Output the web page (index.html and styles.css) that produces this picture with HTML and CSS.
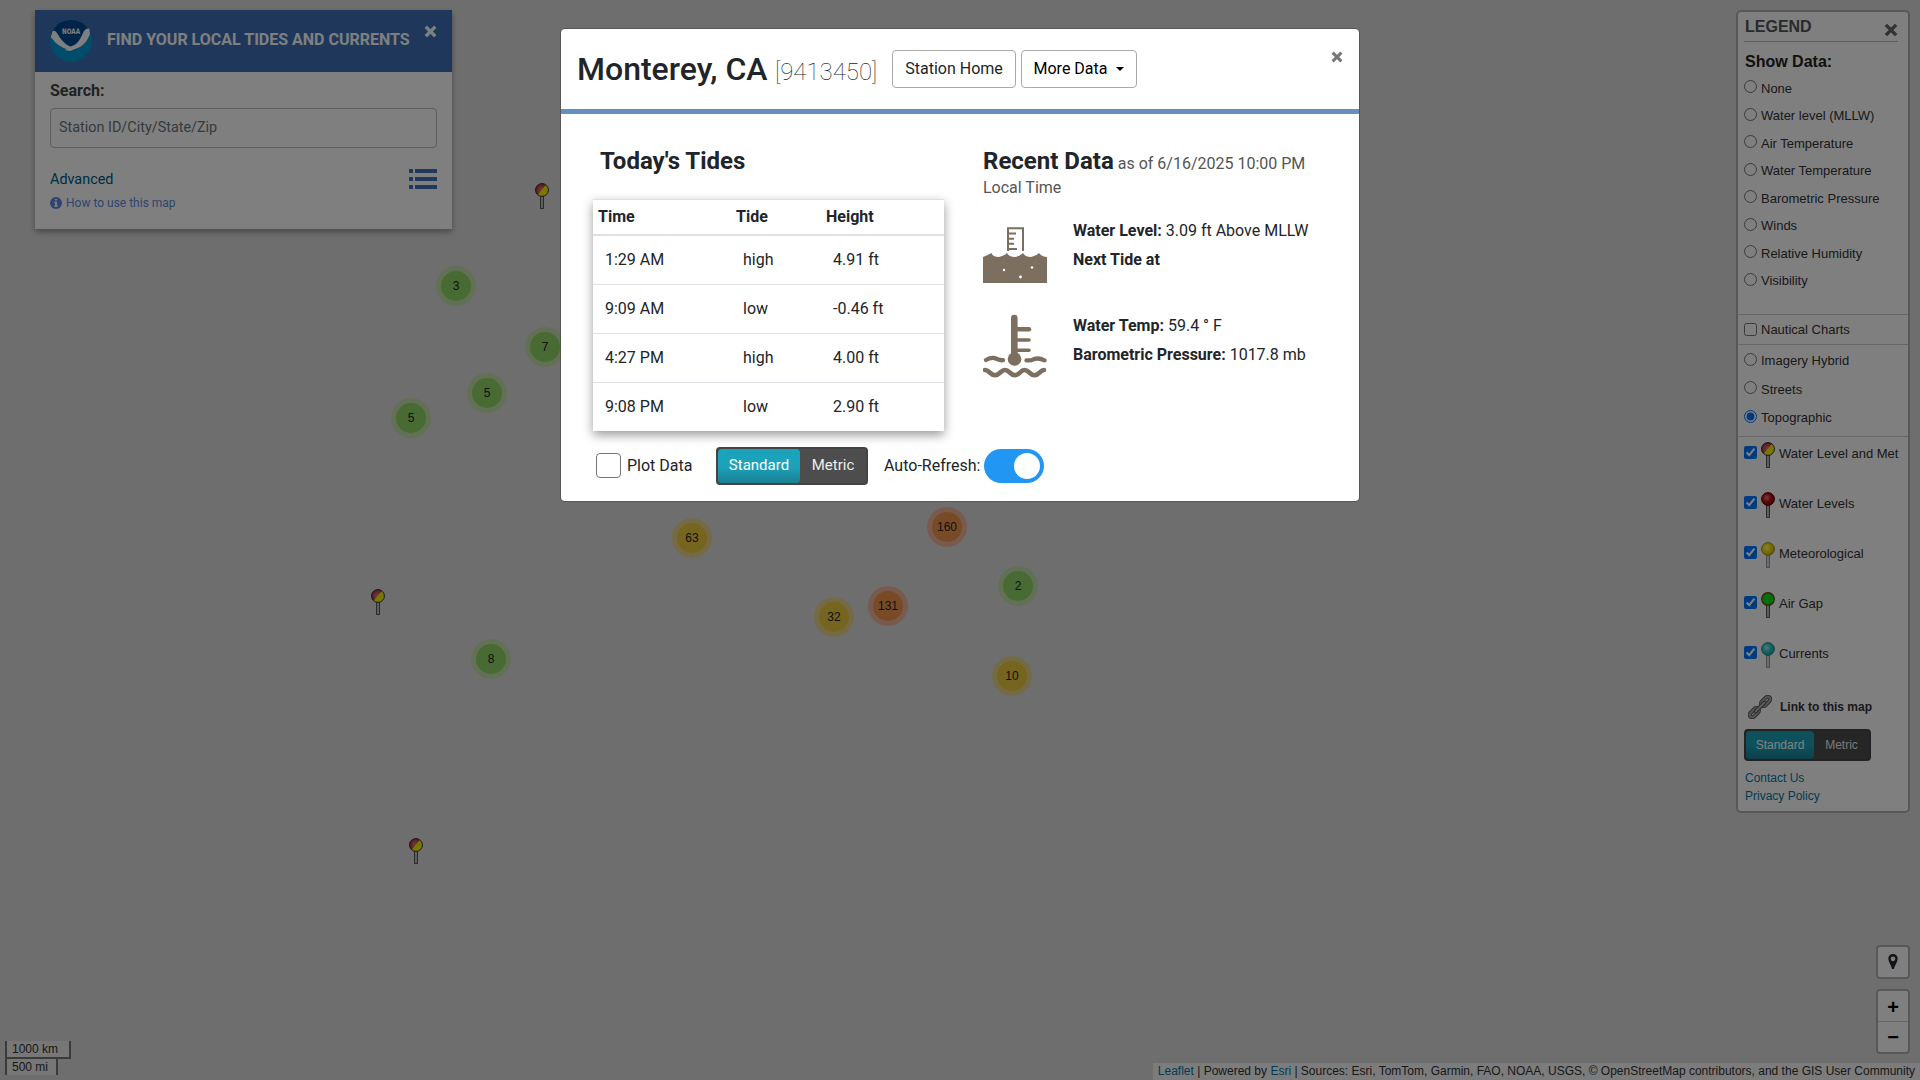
FILE: index.html
```html
<!DOCTYPE html>
<html lang="en">
<head>
<meta charset="utf-8">
<title>NOAA Tides and Currents Map</title>
<link rel="stylesheet" href="styles.css">
</head>
<body>
<svg class="defs" width="0" height="0" aria-hidden="true">
  <defs>
    <linearGradient id="stem" x1="0" x2="1" y1="0" y2="0"><stop offset="0" stop-color="#888"/><stop offset=".5" stop-color="#ddd"/><stop offset="1" stop-color="#777"/></linearGradient>
    <radialGradient id="redball" cx=".4" cy=".4" r=".6"><stop offset="0" stop-color="#e08080"/><stop offset=".5" stop-color="#c81414"/><stop offset="1" stop-color="#8a0000"/></radialGradient>
    <radialGradient id="redhalf" cx=".6" cy=".6" r=".8"><stop offset="0" stop-color="#d88"/><stop offset=".6" stop-color="#b84050"/><stop offset="1" stop-color="#8a0010"/></radialGradient>
    <radialGradient id="yellowball" cx=".4" cy=".4" r=".6"><stop offset="0" stop-color="#fffba0"/><stop offset=".5" stop-color="#f5e400"/><stop offset="1" stop-color="#c8b400"/></radialGradient>
    <radialGradient id="cyanball" cx=".4" cy=".4" r=".6"><stop offset="0" stop-color="#b0f4f4"/><stop offset=".5" stop-color="#35c8cc"/><stop offset="1" stop-color="#1ca0a8"/></radialGradient>
    <g id="stick"><path d="M5.5 13v12.5h3V13" fill="url(#stem)" stroke="#555" stroke-width="1"/></g>
    <symbol id="pin-met" viewBox="0 0 14 26"><use href="#stick"/><circle cx="7" cy="7" r="6.4" fill="#f6f000"/><path d="M2.600 11.800A6.400 6.400 0 0 1 10.800 1.900z" fill="url(#redhalf)"/><circle cx="7" cy="7" r="6.4" fill="none" stroke="#333"/></symbol>
    <symbol id="pin-red" viewBox="0 0 14 26"><use href="#stick"/><circle cx="7" cy="7" r="6.4" fill="url(#redball)" stroke="#400"/></symbol>
    <symbol id="pin-yellow" viewBox="0 0 14 26"><use href="#stick" opacity=".6"/><circle cx="7" cy="7" r="6.4" fill="url(#yellowball)" stroke="#a09020"/></symbol>
    <symbol id="pin-green" viewBox="0 0 14 26"><use href="#stick"/><circle cx="7" cy="7" r="6.3" fill="#00e019" stroke="#7a3010" stroke-width="1.2"/></symbol>
    <symbol id="pin-cyan" viewBox="0 0 14 26"><use href="#stick" opacity=".6"/><circle cx="7" cy="7" r="6.4" fill="url(#cyanball)" stroke="#2a9094"/></symbol>
    <symbol id="cross" viewBox="0 0 12 12"><path d="M1.600 1.600l8.800 8.800M10.400 1.600l-8.800 8.800" fill="none" stroke="currentColor" stroke-width="3"/></symbol>
  </defs>
</svg>

<div class="map">
  <svg class="pin" style="left:535px;top:183px"><use href="#pin-met"/></svg>
  <svg class="pin" style="left:371px;top:589px"><use href="#pin-met"/></svg>
  <svg class="pin" style="left:409px;top:838px"><use href="#pin-met"/></svg>
  <div class="cluster small" style="left:436px;top:266px"><span>3</span></div>
  <div class="cluster small" style="left:525px;top:327px"><span>7</span></div>
  <div class="cluster small" style="left:467px;top:373px"><span>5</span></div>
  <div class="cluster small" style="left:391px;top:398px"><span>5</span></div>
  <div class="cluster small" style="left:471px;top:639px"><span>8</span></div>
  <div class="cluster small" style="left:998px;top:566px"><span>2</span></div>
  <div class="cluster medium" style="left:672px;top:518px"><span>63</span></div>
  <div class="cluster medium" style="left:814px;top:597px"><span>32</span></div>
  <div class="cluster medium" style="left:992px;top:656px"><span>10</span></div>
  <div class="cluster large" style="left:927px;top:507px"><span>160</span></div>
  <div class="cluster large" style="left:868px;top:586px"><span>131</span></div>
</div>

<div class="controls">
  <div class="left-col">
    <section class="finder">
      <header class="finder-head">
        <svg class="logo" viewBox="0 0 42 42">
          <circle cx="21" cy="21" r="21" fill="#0098d4"/>
          <path d="M2.6 11A21 21 0 0 1 39.4 11L22 29z" fill="#00488f"/>
          <path d="M0.8 17L2.8 11Q5 10 7 13C11 20 15 25 20.5 26.5C27 25 30 20 33 13Q35 8 39.2 8.5L40 14C37 21 34 25 29 27.500L20 31 14.500 30 17 29 Q8 27 0.800 17z" fill="#fff"/>
          <path d="M22 27l9-1.500-10 5z" fill="#fff"/>
          <text x="12" y="14" class="logo-text" textLength="18" lengthAdjust="spacingAndGlyphs">NOAA</text>
        </svg>
        <h1>FIND YOUR LOCAL TIDES AND CURRENTS</h1>
        <svg class="finder-close"><use href="#cross"/></svg>
      </header>
      <div class="finder-body">
        <label class="finder-label">Search:</label>
        <div class="finder-input">Station ID/City/State/Zip</div>
        <div class="finder-foot">
          <div>
            <a class="advanced">Advanced</a>
            <a class="howto"><svg viewBox="0 0 12 12"><circle cx="6" cy="6" r="6" fill="currentColor"/><path d="M5 2h2v1.600H5zM4.300 4.700H7V8.400h.8V9.700H4.200V8.400H5V6H4.300z" fill="#fff"/></svg>How to use this map</a>
          </div>
          <svg class="list" viewBox="0 0 28 20"><path d="M0 0h4v4H0zM6 0h22v4H6zM0 8h4v4H0zM6 8h22v4H6zM0 16h4v4H0zM6 16h22v4H6z" fill="#3d6fb6"/></svg>
        </div>
      </div>
    </section>
    <div class="scale"><div class="km">1000 km</div><div class="mi">500 mi</div></div>
  </div>

  <div class="right-col">
    <aside class="legend">
      <div class="legend-top"><h2>LEGEND</h2><svg class="legend-close"><use href="#cross"/></svg></div>
      <h3>Show Data:</h3>
      <div class="radios">
        <label><input type="radio" name="d">None</label>
        <label><input type="radio" name="d">Water level (MLLW)</label>
        <label><input type="radio" name="d">Air Temperature</label>
        <label><input type="radio" name="d">Water Temperature</label>
        <label><input type="radio" name="d">Barometric Pressure</label>
        <label><input type="radio" name="d">Winds</label>
        <label><input type="radio" name="d">Relative Humidity</label>
        <label><input type="radio" name="d">Visibility</label>
      </div>
      <div class="nautical"><label><input type="checkbox">Nautical Charts</label></div>
      <div class="bases">
        <label><input type="radio" name="b">Imagery Hybrid</label>
        <label><input type="radio" name="b">Streets</label>
        <label><input type="radio" name="b" checked>Topographic</label>
      </div>
      <div class="layers">
        <label><input type="checkbox" checked><svg class="key"><use href="#pin-met"/></svg><span>Water Level and Met</span></label>
        <label><input type="checkbox" checked><svg class="key"><use href="#pin-red"/></svg><span>Water Levels</span></label>
        <label><input type="checkbox" checked><svg class="key"><use href="#pin-yellow"/></svg><span>Meteorological</span></label>
        <label><input type="checkbox" checked><svg class="key"><use href="#pin-green"/></svg><span>Air Gap</span></label>
        <label><input type="checkbox" checked><svg class="key"><use href="#pin-cyan"/></svg><span>Currents</span></label>
      </div>
      <div class="maplink">
        <svg viewBox="0 0 24 24" fill="none"><g transform="rotate(-45 12 12)"><g stroke="#555" stroke-width="4"><rect x="-1.500" y="9.500" width="11" height="5" rx="2.500"/><rect x="14.500" y="9.500" width="11" height="5" rx="2.500"/></g><g stroke="#aaa" stroke-width="2.200"><rect x="-1.500" y="9.500" width="11" height="5" rx="2.500"/><rect x="14.500" y="9.500" width="11" height="5" rx="2.500"/></g><path d="M6 12h12" stroke="#555" stroke-width="4" stroke-linecap="round"/><path d="M6 12h12" stroke="#bbb" stroke-width="2" stroke-linecap="round"/></g></svg>
        <b>Link to this map</b>
      </div>
      <div class="units units-sm"><span class="on">Standard</span><span>Metric</span></div>
      <a class="lk">Contact Us</a>
      <a class="lk">Privacy Policy</a>
    </aside>
    <div class="spacer"></div>
    <div class="bar locate"><svg viewBox="0 0 10 16"><path d="M5 0a5 5 0 0 1 5 5c0 3.500-3.300 7-4 11H4C3.300 12 0 8.500 0 5a5 5 0 0 1 5-5zm0 2.600a2.500 2.500 0 1 0 0 5 2.500 2.500 0 0 0 0-5z" fill="#222b33" fill-rule="evenodd"/></svg></div>
    <div class="bar zoom"><span>+</span><span>−</span></div>
    <div class="attribution"><a>Leaflet</a> | Powered by <a>Esri</a> | Sources: Esri, TomTom, Garmin, FAO, NOAA, USGS, © OpenStreetMap contributors, and the GIS User Community</div>
  </div>
</div>

<div class="backdrop">
  <div class="modal">
    <header class="modal-head">
      <h4>Monterey, CA</h4><span class="sid">[9413450]</span>
      <button class="btn home">Station Home</button>
      <button class="btn more">More Data<i class="caret"></i></button>
      <svg class="modal-close"><use href="#cross"/></svg>
    </header>
    <div class="modal-body">
      <section class="tides">
        <h5>Today's Tides</h5>
        <table>
          <thead><tr><th>Time</th><th>Tide</th><th>Height</th></tr></thead>
          <tbody>
            <tr><td>1:29 AM</td><td>high</td><td>4.91 ft</td></tr>
            <tr><td>9:09 AM</td><td>low</td><td>-0.46 ft</td></tr>
            <tr><td>4:27 PM</td><td>high</td><td>4.00 ft</td></tr>
            <tr><td>9:08 PM</td><td>low</td><td>2.90 ft</td></tr>
          </tbody>
        </table>
      </section>
      <section class="recent">
        <div class="recent-head"><h5>Recent Data</h5><span>as of 6/16/2025 10:00 PM</span></div>
        <div class="recent-zone">Local Time</div>
        <div class="reading">
          <svg viewBox="0 0 64 64">
            <path d="M25 31V8.200H40V31M25 13.500h8M25 18.800h6M25 23.800h6M25 29h9" fill="none" stroke="#7c6f60" stroke-width="2"/>
            <path d="M0 37Q5 35 8.500 33 Q9.500 37 16 37Q21 36 24 33Q26 37 32 37Q37 36 40 33Q42 37 48 37Q53 36 56 33Q59 37 64 37V63H0z" fill="#7c6f60"/>
            <g fill="#fff"><circle cx="21" cy="50" r="1.200"/><circle cx="49" cy="47.500" r="1.200"/><circle cx="37.500" cy="57" r="1.400"/></g>
          </svg>
          <div><p><b>Water Level:</b> 3.09 ft Above MLLW</p><p><b>Next Tide at</b></p></div>
        </div>
        <div class="reading second">
          <svg viewBox="0 0 64 64" fill="none" stroke="#7c6f60" stroke-linecap="round">
            <path d="M31.300 4v40" stroke-width="6.600"/>
            <path d="M34 15.300h12" stroke-width="4.600"/><path d="M34 26h12M34 36.300h12" stroke-width="3.600"/>
            <circle cx="31.500" cy="45" r="6.800" fill="#7c6f60" stroke="none"/>
            <path d="M3 46q6-3.500 11-1 3 1.500 6 1.200M43.500 46.300q4 .5 7-1 5-2 11 1" stroke-width="4.300"/>
            <path d="M2 56c4.500 0 5 5.200 10 5.200S17.500 56 22 56s5 5.200 10 5.200S37 56 41.500 56s5 5.200 10 5.200S57 56 61 56" stroke-width="4.600"/>
          </svg>
          <div><p><b>Water Temp:</b> 59.4 ° F</p><p><b>Barometric Pressure:</b> 1017.8 mb</p></div>
        </div>
      </section>
    </div>
    <footer class="modal-foot">
      <span class="box"></span><span class="plot">Plot Data</span>
      <div class="units units-lg"><span class="on">Standard</span><span>Metric</span></div>
      <span class="auto">Auto-Refresh:</span><span class="switch"></span>
    </footer>
  </div>
</div>
</body>
</html>
```

FILE: styles.css
```css
* { box-sizing: border-box; }
body { margin: 0; height: 1080px; overflow: hidden; font: 16px/24px Roboto, sans-serif; color: #212529; background: #ddd; }
h1, h2, h3, h4, h5, p { margin: 0; }
.defs { position: absolute; }

.map { position: absolute; inset: 0; }
.pin { position: absolute; width: 14px; height: 26px; }
.cluster { position: absolute; width: 40px; height: 40px; padding: 5px; border-radius: 50%; }
.cluster span { display: block; height: 30px; border-radius: 50%; text-align: center; font: 12px/30px "Liberation Sans", Arial, sans-serif; color: #222; }
.small { background: rgba(181, 226, 140, .6); }
.small span { background: rgba(110, 204, 57, .6); }
.medium { background: rgba(241, 211, 87, .6); }
.medium span { background: rgba(240, 194, 12, .6); }
.large { background: rgba(253, 156, 115, .6); }
.large span { background: rgba(241, 128, 23, .6); }

/* Map controls float over the canvas */
.controls { position: absolute; inset: 0; display: flex; justify-content: space-between; }
.left-col { display: flex; flex-direction: column; justify-content: space-between; align-items: flex-start; padding: 10px 0 5px 5px; }
.right-col { display: flex; flex-direction: column; align-items: flex-end; padding-top: 10px; }
.spacer { flex: 1; }

.finder { width: 417px; height: 219px; margin-left: 30px; background: #fff; box-shadow: 0 3px 6px rgba(0, 0, 0, .35); }
.finder-head { height: 62px; background: #3d6fb6; display: flex; align-items: center; padding-left: 15px; color: #fff; }
.logo { width: 42px; height: 42px; }
.logo-text { font: bold 7.5px "DejaVu Sans", sans-serif; fill: #fff; }
.finder-head h1 { margin: -2px 0 0 15px; font-size: 16px; line-height: 20px; white-space: nowrap; width: 317px; }
.finder-close { width: 13px; height: 13px; margin-top: -19px; color: #fff; }
.finder-body { padding: 7px 15px 0; }
.finder-label { display: block; font-weight: 700; color: #444; }
.finder-input { height: 40px; margin-top: 5px; border: 1px solid #bbb; border-radius: 4px; padding: 0 8px; line-height: 38px; font-size: 14.4px; color: #6c757d; }
.finder-foot { display: flex; justify-content: space-between; margin-top: 20px; }
.advanced { display: block; font-size: 14.4px; line-height: 24px; color: #005a87; }
.howto { display: flex; align-items: center; gap: 4px; font-size: 12px; line-height: 23px; color: #5f89e0; }
.howto svg { width: 12px; height: 12px; margin-top: -1px; }
.list { width: 28px; height: 20px; margin-top: 1px; }

.scale { font: 12px/16px "Liberation Sans", Arial, sans-serif; color: #333; }
.scale div { border: 2px solid #777; background: rgba(255, 255, 255, .5); border-top: 0; padding-left: 5px; height: 18px; }
.km { width: 66px; }
.scale .mi { width: 53px; border-bottom: 0; height: 16px; }

.legend { width: 174px; height: 803px; margin-right: 10px; border: 2px solid rgba(0, 0, 0, .2); border-radius: 5px; background: #fff; background-clip: padding-box; font: 13px/18px "Liberation Sans", Arial, sans-serif; color: #333; }
.legend label { display: flex; align-items: center; white-space: nowrap; }
.legend input { width: 13px; height: 13px; margin: 0 4px 0 0; flex: none; }
.legend-top { display: flex; justify-content: space-between; height: 30px; margin: 0 10px 0 6px; border-bottom: 1px solid #bbb; }
.legend h2 { font-size: 16px; line-height: 29px; color: #555; margin-left: 1px; }
.legend-close { width: 14px; height: 14px; margin: 11px 0 0; color: #666; }
.legend h3 { font-size: 16px; line-height: 20px; margin: 10px 0 0 7px; color: #222; }
.radios { height: 242px; padding: 3px 0 0 6px; }
.radios label { height: 27.5px; }
.radios input { margin-bottom: 4px; }
.bases input { margin-bottom: 4px; }
.nautical { height: 30px; padding: 6px; border-top: 1px solid #ccc; }
.nautical input { margin-bottom: 1px; }
.bases { height: 92px; padding: 2px 0 0 6px; border-top: 1px solid #ccc; }
.bases label { height: 28.5px; }
.layers { height: 250px; border-top: 1px solid #ccc; padding-left: 6px; }
.layers label { height: 50px; align-items: flex-start; }
.layers input { margin-top: 9px; }
.layers .key { width: 14px; height: 26px; margin: 5px 4px 0 0; }
.layers span { margin-top: 8px; }
.maplink { display: flex; align-items: center; height: 24px; margin: 9px 0 10px 10px; gap: 8px; font-size: 12px; }
.maplink svg { width: 24px; height: 24px; }
.units { display: flex; background: #4d4d4d; border: 2px solid #444; border-radius: 4px; color: #eee; text-align: center; }
.units span { flex: 1; }
.units .on { border-radius: 4px; background: linear-gradient(#1ba3bb 50%, #1b8093); color: #fff; }
.units-sm { width: 127px; height: 32px; margin-left: 6px; margin-bottom: 8px; font-size: 12px; line-height: 28px; }
.units-sm .on { flex: 0 0 68px; }
.lk { display: block; margin-left: 7px; font-size: 12px; color: #0078a8; }

.bar { width: 34px; margin-right: 10px; border: 2px solid rgba(0, 0, 0, .2); border-radius: 4px; background: #fff; background-clip: padding-box; }
.locate { height: 34px; margin-bottom: 10px; display: flex; align-items: center; justify-content: center; }
.locate svg { width: 10px; height: 15px; margin-bottom: 1px; }
.zoom { height: 65px; margin-bottom: 9px; }
.zoom span { display: block; height: 30px; text-align: center; font: bold 20px/33px "Liberation Sans", Arial, sans-serif; color: #000; }
.zoom span + span { height: 31px; border-top: 1px solid #ccc; line-height: 31px; }
.attribution { height: 17px; padding: 0 5px; background: rgba(255, 255, 255, .8); font: 12px/17px "Liberation Sans", Arial, sans-serif; color: #333; white-space: nowrap; }
.attribution a { color: #0078a8; }

/* Station dialog */
.backdrop { position: absolute; inset: 0; display: flex; justify-content: center; align-items: flex-start; padding-top: 28px; background: rgba(0, 0, 0, .5); }
.modal { width: 800px; height: 474px; background: #fff; background-clip: padding-box; border: 1px solid rgba(0, 0, 0, .2); border-radius: 5px; }
.modal-head { display: flex; height: 85px; border-bottom: 5px solid #6590be; padding: 0 16px; }
.modal-head h4 { font-size: 32px; font-weight: 500; line-height: 80px; white-space: nowrap; width: 198px; }
.sid { font-size: 24px; font-weight: 100; line-height: 86px; width: 117px; white-space: nowrap; }
.btn { height: 38px; margin: 21px 5px 0 0; padding: 0; border: 1px solid #aaa; border-radius: 4px; background: #fff; color: #212529; font: 16px/24px Roboto, sans-serif; }
.home { width: 124px; }
.more { width: 116px; color: #000; }
.caret { display: inline-block; margin-left: 9px; vertical-align: 3px; border: 4px solid transparent; border-top-color: #000; border-bottom: 0; }
.modal-close { width: 12px; height: 12px; margin: 22px 0 0 auto; color: #777; }
.modal-body { display: flex; height: 320px; padding: 34px 32px 0; }
.tides { width: 351px; margin-right: 39px; }
.modal h5 { font-size: 24px; line-height: 26px; font-weight: 700; }
.tides h5 { margin: 0 0 25px 7px; }
table { width: 351px; border-collapse: separate; border-spacing: 0; table-layout: fixed; box-shadow: 0 4px 10px rgba(0, 0, 0, .4); }
th { height: 37px; padding: 0 5px; text-align: left; border-top: 1px solid #dee2e6; border-bottom: 2px solid #dee2e6; }
th:first-child { width: 138px; }
th:nth-child(2) { width: 90px; }
td { height: 49px; padding: 0 12px; border-bottom: 1px solid #dee2e6; }
tr:last-child td { height: 48px; border-bottom: 0; }
.recent { width: 340px; }
.recent-head { display: flex; align-items: baseline; gap: 4px; height: 26px; white-space: nowrap; }
.recent-head span, .recent-zone { color: #555; }
.recent-zone { height: 27px; line-height: 28px; }
.reading { display: flex; height: 95px; }
.reading svg { width: 64px; height: 64px; margin: 19px 26px 0 0; flex: none; }
.reading.second svg { margin-top: 18px; }
.reading p { height: 29px; white-space: nowrap; }
.reading div { padding-top: 18px; }
.modal-foot { display: flex; align-items: center; height: 67px; padding: 0 0 4px 35px; }
.box { width: 25px; height: 25px; margin-bottom: 1px; border: 1px solid #767676; border-radius: 4px; }
.plot { margin-left: 6px; width: 89px; }
.units-lg { width: 152px; height: 38px; line-height: 32px; font-size: 15px; }
.units-lg .on { flex: 0 0 82px; }
.auto { margin-left: 16px; width: 100px; white-space: nowrap; }
.switch { width: 60px; height: 34px; border-radius: 17px; background: #2196f3; padding: 4px; display: flex; justify-content: flex-end; }
.switch::after { content: ""; width: 26px; height: 26px; border-radius: 50%; background: #fff; }
```
